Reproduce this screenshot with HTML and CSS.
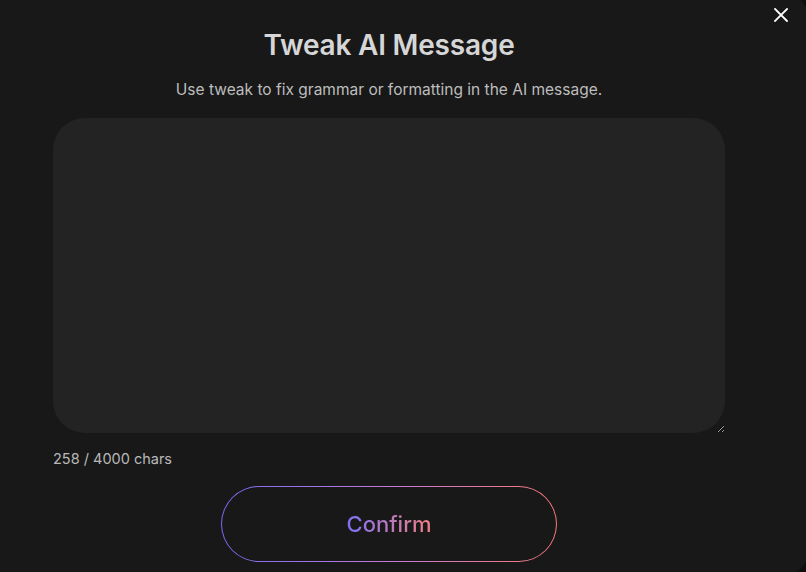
FILE: index.html
```html
<!DOCTYPE html>
<html lang="en">
<head>
    <meta charset="UTF-8">
    <meta name="viewport" content="width=device-width, initial-scale=1.0">
    <title>Tweak AI Message</title>
    <link rel="stylesheet" href="styles.css">
</head>
<body>
    <div class="modal">
        <!-- Close button -->
        <button class="close-btn" aria-label="Close">
            <svg width="14" height="14" viewBox="0 0 14 14">
                <path d="M1 1 L13 13 M13 1 L1 13" stroke="#fff" stroke-width="1.8" stroke-linecap="square" fill="none"/>
            </svg>
        </button>

        <h1 class="modal-title">Tweak AI Message</h1>
        <p class="modal-subtitle">Use tweak to fix grammar or formatting in the AI message.</p>

        <textarea class="message-input"></textarea>
        <div class="char-count">258 / 4000 chars</div>

        <div class="actions">
            <button class="confirm-btn"><span>Confirm</span></button>
        </div>
    </div>
</body>
</html>
```

FILE: styles.css
```css
body {
    margin: 0;
    padding: 0;
    background-color: #0e0e0e;
    font-family: Inter, "Noto Sans", sans-serif;
    overflow: hidden;
}

.modal {
    position: relative;
    box-sizing: border-box;
    width: 842px;
    height: 587px;
    margin: -9px 0 0 -32px;
    padding: 0 85px;
    background-color: #181818;
    border-radius: 32px;
}

.close-btn {
    position: absolute;
    top: 17px;
    right: 22px;
    padding: 0;
    border: none;
    background: none;
    cursor: pointer;
    line-height: 0;
}

.modal-title {
    margin: 0;
    padding-top: 36px;
    text-align: center;
    font-size: 28px;
    font-weight: 600;
    line-height: 36px;
    color: #d6d6d6;
    letter-spacing: -0.2px;
}

.modal-subtitle {
    margin: 17px 0 0;
    text-align: center;
    font-size: 15.5px;
    line-height: 20px;
    color: #bdbdbd;
}

.message-input {
    display: block;
    box-sizing: border-box;
    width: 100%;
    height: 315px;
    margin-top: 18px;
    padding: 20px 24px;
    border: none;
    border-radius: 32px;
    background-color: #232323;
    color: #ddd;
    font-family: inherit;
    font-size: 15px;
    outline: none;
    resize: vertical;
}

.char-count {
    margin-top: 16px;
    font-size: 14.5px;
    line-height: 20px;
    color: #b8b8b8;
}

.actions {
    display: flex;
    justify-content: center;
    margin-top: 17px;
}

.confirm-btn {
    width: 336px;
    height: 76px;
    padding: 0;
    border: 1px solid transparent;
    border-radius: 38px;
    background:
        linear-gradient(#181818, #181818) padding-box,
        linear-gradient(90deg, #7a6af7, #c47ad8 50%, #f57a78) border-box;
    cursor: pointer;
    font-family: inherit;
    font-size: 22px;
    font-weight: 500;
}

.confirm-btn span {
    background: linear-gradient(90deg, #7f72f6, #f07f86);
    -webkit-background-clip: text;
    background-clip: text;
    color: transparent;
}
```
